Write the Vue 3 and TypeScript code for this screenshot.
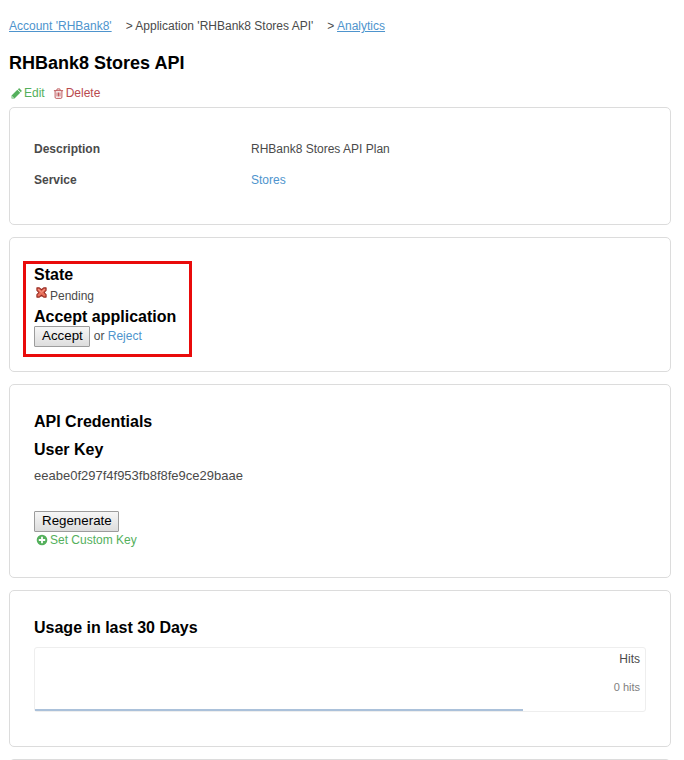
<script setup lang="ts">
interface Detail {
  label: string
  value: string
  href?: string
}

const details: Detail[] = [
  { label: 'Description', value: 'RHBank8 Stores API Plan' },
  { label: 'Service', value: 'Stores', href: '#service' },
]
const userKey = 'eeabe0f297f4f953fb8f8fe9ce29baae'
const hits = 0
</script>

<template>
  <main class="page">
    <nav class="breadcrumb" aria-label="Breadcrumb">
      <span><a href="#account">Account 'RHBank8'</a></span>
      <span>&gt; Application 'RHBank8 Stores API'</span>
      <span>&gt; <a href="#analytics">Analytics</a></span>
    </nav>

    <h1>RHBank8 Stores API</h1>

    <div class="actions">
      <a class="action edit" href="#edit">
        <svg class="icon" viewBox="0 0 12 12" aria-hidden="true">
          <path d="M.6 8.2 6.9 1.9l3.2 3.2-6.3 6.3H.6z" fill="currentColor" />
          <path d="M7.5 1.3 8.4.5q.5-.4 1 0l2.1 2.1q.4.5 0 1l-.8.9z" fill="currentColor" />
          <path d="M1.5 8.9v1.6h1.6" fill="none" stroke="#fff" stroke-width=".6" />
        </svg>
        Edit
      </a>
      <a class="action delete" href="#delete">
        <svg class="icon" viewBox="0 0 12 12" aria-hidden="true">
          <path d="M1 2.9h10M4 2.7 4.6 1h2.8L8 2.7M2.3 3v7q0 1.3 1.1 1.3h5.2q1.1 0 1.1-1.3V3M4.4 4.8v4.5M6 4.8v4.5M7.6 4.8v4.5" fill="none" stroke="currentColor" stroke-width="1" />
        </svg>
        Delete
      </a>
    </div>

    <section class="card details-card">
      <dl>
        <div v-for="item in details" :key="item.label" class="detail">
          <dt>{{ item.label }}</dt>
          <dd>
            <a v-if="item.href" :href="item.href">{{ item.value }}</a>
            <template v-else>{{ item.value }}</template>
          </dd>
        </div>
      </dl>
    </section>

    <section class="card state-card">
      <div class="highlight">
        <h2>State</h2>
        <p class="status">
          <svg class="cross" viewBox="0 0 12 12" aria-hidden="true">
            <path d="M1 1h2.6L6 3 8.4 1H11v2.6L8.8 6 11 8.4V11H8.4L6 9 3.6 11H1V8.4L3.2 6 1 3.6z" fill="#e8705c" stroke="#96281f" stroke-width="1.2" stroke-linejoin="round" />
            <path d="M2.4 2.4 6 5.6l3.6-3.2" fill="none" stroke="#f6a596" stroke-width=".9" />
          </svg>
          Pending
        </p>
        <h2>Accept application</h2>
        <div class="decision">
          <button type="button">Accept</button>
          <span>or <a href="#reject">Reject</a></span>
        </div>
      </div>
    </section>

    <section class="card credentials-card">
      <h2>API Credentials</h2>
      <h2>User Key</h2>
      <p class="key">{{ userKey }}</p>
      <button type="button">Regenerate</button>
      <a class="custom-key" href="#custom-key">
        <svg class="icon" viewBox="0 0 12 12" aria-hidden="true">
          <circle cx="6" cy="6" r="5.3" fill="currentColor" />
          <path d="M6 2.8v6.4M2.8 6h6.4" stroke="#fff" stroke-width="1.8" />
        </svg>
        Set Custom Key
      </a>
    </section>

    <section class="card usage-card">
      <h2>Usage in last 30 Days</h2>
      <div class="chart">
        <div class="plot"></div>
        <div class="legend">
          <span>Hits</span>
          <small>{{ hits }} hits</small>
        </div>
      </div>
    </section>

    <section class="card next-card"></section>
  </main>
</template>

<style>
body {
  margin: 0;
  background: #fff;
}
</style>

<style scoped>
.page {
  box-sizing: border-box;
  height: 100vh;
  overflow: hidden;
  padding: 16px 13px 0 9px;
  color: #4a4a4a;
  font: 12px/20px "Liberation Sans", Arial, sans-serif;
}

h1,
h2,
p,
dl,
dd {
  margin: 0;
}

a {
  color: #4e94cd;
  text-decoration: none;
}

.breadcrumb {
  display: flex;
  gap: 14px;
}

.breadcrumb a {
  text-decoration: underline;
}

h1 {
  margin-top: 16px;
  color: #000;
  font-size: 18px;
  line-height: 22px;
}

h2 {
  color: #000;
  font-size: 16px;
  line-height: 20px;
}

.actions {
  display: flex;
  gap: 8px;
  margin-top: 9px;
  padding-left: 2px;
}

.action,
.custom-key {
  display: flex;
  align-items: center;
  gap: 2px;
}

.edit,
.custom-key {
  color: #54b05c;
}

.delete {
  color: #b94a4e;
}

.icon {
  flex: none;
  width: 12px;
  height: 12px;
}

.action .icon {
  width: 11px;
  height: 11px;
}

.card {
  border: 1px solid #dcdcdc;
  border-radius: 5px;
  margin-bottom: 12px;
  padding: 27px 24px 29px;
}

.actions + .card {
  margin-top: 4px;
}

.details-card {
  padding: 26px 24px 28px;
}

.detail {
  display: grid;
  grid-template-columns: 217px 1fr;
  line-height: 31px;
}

dt {
  font-weight: bold;
}

.state-card {
  padding: 23px 13px 14px;
}

.highlight {
  width: fit-content;
  border: 3px solid #e90b0b;
  padding: 1px 13px 7px 8px;
}

.status {
  display: flex;
  align-items: flex-start;
  gap: 3px;
  padding-left: 2px;
  line-height: 22px;
}

.cross {
  width: 11px;
  height: 11px;
  margin-top: 2px;
}

.decision {
  display: flex;
  align-items: flex-start;
  gap: 4px;
  line-height: 18px;
}

.decision button {
  margin-top: -1px;
}

button {
  box-sizing: border-box;
  height: 21px;
  border: 1px solid #9c9c9c;
  border-radius: 1px;
  padding: 0 6px 2px 7px;
  background: linear-gradient(#f6f6f6, #dddddd);
  color: #000;
  font-family: inherit;
}

.credentials-card h2 + h2 {
  margin-top: 8px;
}

.key {
  margin: 6px 0 25px;
  font-size: 13px;
}

.credentials-card button {
  display: block;
}

.custom-key {
  width: fit-content;
  padding-left: 2px;
  line-height: 16px;
}

.usage-card {
  padding-bottom: 34px;
}

.chart {
  display: flex;
  align-items: flex-end;
  justify-content: space-between;
  box-sizing: border-box;
  height: 65px;
  margin-top: 9px;
  border: 1px solid #eeeeee;
  border-radius: 3px;
}

.plot {
  width: 80%;
  height: 2px;
  background: #abc1da;
}

.legend {
  display: flex;
  flex-direction: column;
  align-self: stretch;
  align-items: flex-end;
  gap: 8px;
  padding: 1px 5px 0 0;
}

small {
  color: #808080;
  font-size: 11px;
}

.next-card {
  min-height: 60px;
}
</style>
